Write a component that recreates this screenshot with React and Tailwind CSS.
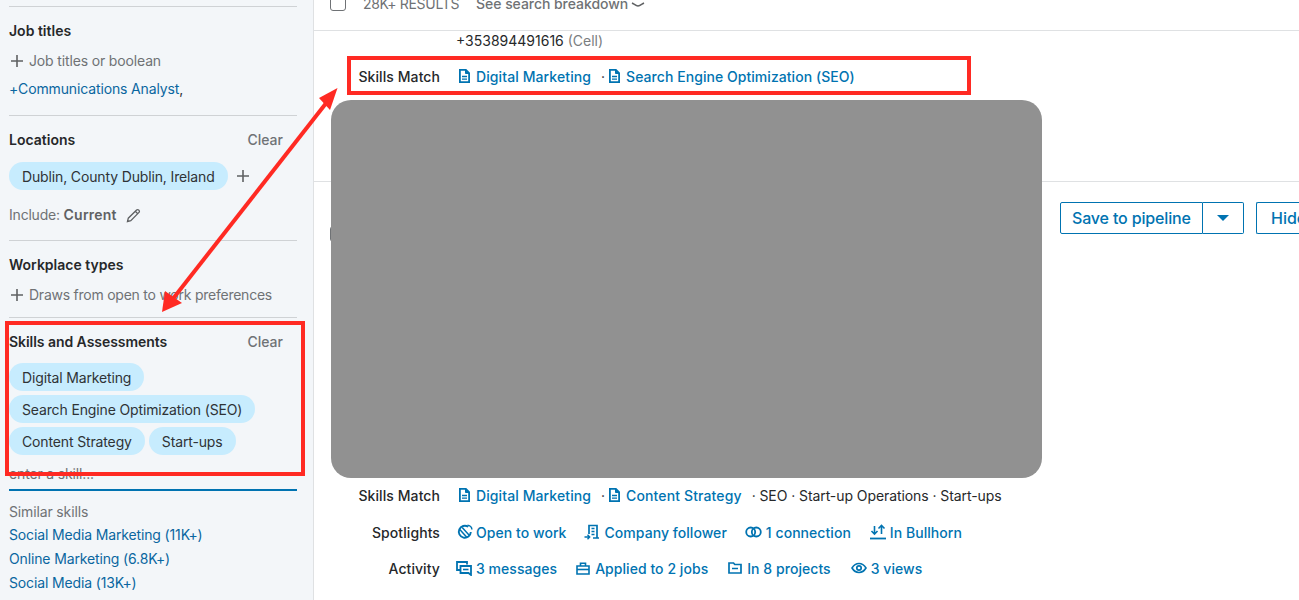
import React from "react";

const C = "#0073b1";
const Doc = () => (
  <svg width="11" height="14" viewBox="0 0 11 14" className="ml-px shrink-0">
    <path d="M.9 .9h6l3.200 3.200v9H.9z" fill="none" stroke={C} strokeWidth="1.800" />
    <path d="M6.500 1v3.500h3.500z" fill={C} stroke={C} />
    <path d="M3 7.500h5M3 10.200h5" stroke={C} strokeWidth="1.300" />
  </svg>
);
const Plus = () => (
  <svg width="14" height="14" viewBox="0 0 14 14" className="shrink-0">
    <path d="M7 1v12M1 7h12" stroke="#5f6163" strokeWidth="1.600" />
  </svg>
);
const Pill = ({ children }) => (
  <span className="inline-flex h-7 items-center whitespace-nowrap rounded-full bg-[#c7ecfe] px-[13px] text-[14px] tracking-[-0.14px] text-[#2f3336]">{children}</span>
);
const Divider = () => <div className="h-px bg-[#cfd2d5]" />;
const SideLink = ({ children, className = "" }) => (
  <div className={`text-[14px] leading-[24px] tracking-[-0.14px] text-[#0a66a0] ${className}`}>{children}</div>
);
const A = ({ icon, w, t = "tracking-[0.05px]", className = "", children }) => (
  <span className={`flex items-center whitespace-nowrap font-medium text-[#0073b1] ${t} ${className}`}>
    <span className={`flex justify-start ${w}`}>{icon}</span>{children}
  </span>
);
const s = { fill: "none", stroke: C, strokeWidth: 1.700 };

const OpenToWork = () => (
  <svg width="16" height="16" viewBox="0 0 16 16">
    <path d="M11.200 2.800A6 6 0 1 0 13.800 8" {...s} strokeWidth="1.900" />
    <path d="M2.800 5.400l7.200 8M5.200 3.400l7 7.800" {...s} strokeWidth="1.500" />
    <path d="M10.500 1.200a4.500 4.500 0 0 1 4.400 4.300" {...s} strokeWidth="1.500" />
  </svg>
);
const Company = () => (
  <svg width="16" height="16" viewBox="0 0 16 16">
    <path d="M5 10V1.500h8v12.500h2M9 14h4" {...s} />
    <path d="M7.500 4.500h3M7.500 7.500h3M7.500 10.500h3" {...s} strokeWidth="1.400" />
    <path d="M0.500 13h5M3.500 10.800l2.200 2.200-2.200 2.200" {...s} strokeWidth="1.400" />
  </svg>
);
const Connection = () => (
  <svg width="17" height="12" viewBox="0 0 17 12">
    <circle cx="5.700" cy="6" r="4.500" {...s} strokeWidth="1.800" />
    <circle cx="11.300" cy="6" r="4.500" {...s} strokeWidth="1.800" />
  </svg>
);
const Bullhorn = () => (
  <svg width="16" height="16" viewBox="0 0 16 16">
    <path d="M4.500 2v8M1.500 7l3 3.200L7.500 7" {...s} strokeWidth="1.600" />
    <path d="M11.500 10V1.500M8.500 4.500l3-3.200 3 3.200" {...s} strokeWidth="1.600" />
    <path d="M0 14.500h16" {...s} strokeWidth="1.800" />
  </svg>
);
const Messages = () => (
  <svg width="16" height="15" viewBox="0 0 16 15">
    <path d="M4 9H1V1h10v2.500" {...s} strokeWidth="1.800" />
    <path d="M4.500 5h10.500v9l-2.500-2H4.500z" {...s} strokeWidth="1.800" />
    <path d="M7 8.500h5.500" {...s} strokeWidth="1.600" />
  </svg>
);
const Briefcase = () => (
  <svg width="14" height="13" viewBox="0 0 14 13">
    <path d="M1 4h12v8H1zM4.500 4V1.200h5V4" {...s} strokeWidth="1.600" />
    <path d="M1 7.500h12" {...s} strokeWidth="1.600" />
  </svg>
);
const Folder = () => (
  <svg width="14" height="12" viewBox="0 0 14 12">
    <path d="M1 1h4.500l1.300 1.500H13V11H1z" {...s} strokeWidth="1.700" />
    <path d="M4 6.500h6" {...s} strokeWidth="1.500" />
  </svg>
);
const Eye = () => (
  <svg width="16" height="12" viewBox="0 0 16 12">
    <path d="M1 6c1.800-3 4-4.500 7-4.500S13.200 3 15 6c-1.800 3-4 4.500-7 4.500S2.800 9 1 6z" {...s} strokeWidth="1.600" />
    <circle cx="8" cy="6" r="2.200" {...s} strokeWidth="1.700" />
  </svg>
);

const Row = ({ label, className = "", children }) => (
  <div className={`flex h-[20px] items-center text-[14px] ${className}`}>
    <span className="w-[126px] shrink-0 text-right font-medium tracking-[0.08px] text-[#26282a]">{label}</span>
    <div className="ml-[18px] flex items-center">{children}</div>
  </div>
);
const Dot = ({ className = "" }) => <span className={`text-[#26282a] ${className}`}>·</span>;

const Sidebar = () => (
  <aside className="h-[600px] w-[314px] shrink-0 overflow-hidden border-r border-[#dfe1e3] bg-[#f3f6f9] pl-[9px] pr-[16px] pt-[6px]">
    <Divider />
    <div className="mt-[15px] text-[14px] font-semibold leading-[18px] text-[#26282a]">Job titles</div>
    <div className="mt-[12px] flex items-center gap-[5px] text-[14px] leading-[18px] tracking-[-0.15px] text-[#6f7275]"><span className="ml-px"><Plus /></span>Job titles or boolean</div>
    <div className="mt-[10px] text-[14px] leading-[18px] tracking-[-0.14px] text-[#0a66a0]">+Communications Analyst<span className="text-[#2f3336]">,</span></div>
    <div className="mt-[17px]"><Divider /></div>
    <div className="mt-[15px] flex justify-between pr-[14px] text-[14px] leading-[18px]"><span className="font-semibold text-[#26282a]">Locations</span><span className="font-medium text-[#6f7275]">Clear</span></div>
    <div className="mt-[13px] flex items-center"><Pill>Dublin, County Dublin, Ireland</Pill><span className="ml-[8px]"><Plus /></span></div>
    <div className="mt-[16px] flex items-center text-[14px] leading-[18px] text-[#6f7275]"><span className="tracking-[-0.2px]">Include:&nbsp;</span><b className="font-semibold tracking-[0.2px] text-[#5f6163]">Current</b>
      <svg width="15" height="15" viewBox="0 0 15 15" className="ml-[9px]"><path d="M1.500 13.500l.8-3.300L10.600 2a1.400 1.400 0 0 1 2 0l.4.4a1.400 1.400 0 0 1 0 2l-8.200 8.300zM9.300 3.300l2.400 2.400" fill="none" stroke="#5f6163" strokeWidth="1.300" /></svg>
    </div>
    <div className="mt-[16px]"><Divider /></div>
    <div className="mt-[15px] text-[14px] font-semibold leading-[18px] text-[#26282a]">Workplace types</div>
    <div className="mt-[12px] flex items-center gap-[5px] whitespace-nowrap text-[14px] leading-[18px] tracking-[-0.24px] text-[#6f7275]"><span className="ml-px"><Plus /></span>Draws from open to work preferences</div>
    <div className="mt-[13px]"><Divider /></div>
    <div className="mt-[15px] flex justify-between pr-[14px] text-[14px] leading-[18px]"><span className="font-semibold tracking-[-0.05px] text-[#26282a]">Skills and Assessments</span><span className="font-medium text-[#6f7275]">Clear</span></div>
    <div className="mt-[12px] flex flex-col items-start gap-1">
      <Pill>Digital Marketing</Pill>
      <Pill>Search Engine Optimization (SEO)</Pill>
      <div className="flex gap-1"><Pill>Content Strategy</Pill><Pill>Start-ups</Pill></div>
    </div>
    <div className="mt-[10px] text-[14px] leading-[18px] tracking-[-0.15px] text-[#6f7275]">enter a skill...</div>
    <div className="mt-[6px] h-[2px] bg-[#0073b1]" />
    <div className="mt-[12px] text-[14px] leading-[18px] tracking-[-0.14px] text-[#6f7275]">Similar skills</div>
    <SideLink className="mt-[2px]">Social Media Marketing (11K+)</SideLink>
    <SideLink>Online Marketing (6.8K+)</SideLink>
    <SideLink>Social Media (13K+)</SideLink>
  </aside>
);

const Overlay = () => (
  <>
    <div className="absolute left-[331px] top-[100px] h-[378px] w-[711px] rounded-[20px] bg-[#919191]" />
    <div className="absolute left-[347px] top-[56px] h-[39px] w-[624px] border-4 border-[#ff2a23]" />
    <div className="absolute left-[5px] top-[321px] h-[155px] w-[300px] border-4 border-[#ff2a23]" />
    <svg className="absolute left-0 top-0" width="1299" height="600" viewBox="0 0 1299 600" fill="none">
      <path d="M327 102L172 300" stroke="#ff2a23" strokeWidth="4" />
      <path d="M337.500 88L319 98l11 12z" fill="#ff2a23" />
      <path d="M162 312l3-21 17 12z" fill="#ff2a23" />
    </svg>
  </>
);

export default function App() {
  return (
    <div className="relative h-[600px] w-[1299px] overflow-hidden bg-white font-['Inter',sans-serif]">
      <div className="flex h-full">
        <Sidebar />
        <main className="relative min-w-0 flex-1 overflow-hidden">
          <div className="flex h-[31px] items-start border-b border-[#dfe1e3] pl-[16px] text-[14px] text-[#6f7275]">
            <div className="mt-[-5px] h-[16px] w-[16px] shrink-0 rounded-[3px] border border-[#6f7275]" />
            <span className="ml-[17px] mt-[-5px] whitespace-nowrap leading-[18px] tracking-[-0.3px]">28K+ RESULTS</span>
            <span className="ml-[17px] mt-[-5px] flex items-center whitespace-nowrap font-medium leading-[18px] tracking-[-0.05px]">See search breakdown
              <svg width="14" height="8" viewBox="0 0 14 8" className="ml-[3px] mt-px"><path d="M1 2c2 1 4 3 6 3s4-2 6-3" fill="none" stroke="#5f6163" strokeWidth="1.500" /></svg>
            </span>
          </div>
          <div className="pl-[142px] pt-px text-[14px] leading-[18px] text-[#26282a]">+353894491616 <span className="text-[#7a7d80]">(Cell)</span></div>
          <Row className="mt-[16px]" label="Skills Match">
            <A icon={<Doc />} w="w-[18px]" t="tracking-[0.1px]">Digital Marketing</A><Dot className="ml-[10px] mr-[3px]" /><A icon={<Doc />} w="w-[18px]">Search Engine Optimization (SEO)</A>
          </Row>
          <div className="mt-[95px] h-px bg-[#dfe1e3]" />
          <div className="flex h-[303px] items-start justify-between pt-[20px]">
            <div className="ml-[16px] mt-[24px] h-[16px] w-[16px] rounded-[3px] border border-[#6f7275]" />
            <div className="flex h-[32px] items-stretch">
              <button className="flex w-[143px] items-center rounded-l-[2px] border border-[#0073b1] pl-[11px] text-[16px] font-medium tracking-[-0.15px] text-[#0073b1]">Save to pipeline</button>
              <button className="flex w-[41px] items-center justify-center rounded-r-[2px] border border-l-0 border-[#0073b1]"><svg width="12" height="6" viewBox="0 0 12 6"><path d="M0 0h12L6 6z" fill="#0073b1" /></svg></button>
              <button className="ml-[12px] w-[43px] overflow-hidden whitespace-nowrap rounded-l-[2px] border border-r-0 border-[#0073b1] pl-[14px] text-left text-[16px] font-medium text-[#0073b1]">Hide</button>
            </div>
          </div>
          <Row label="Skills Match">
            <A icon={<Doc />} w="w-[18px]" t="tracking-[0.1px]">Digital Marketing</A><Dot className="ml-[10px] mr-[3px]" /><A icon={<Doc />} w="w-[18px]" t="tracking-[0.12px]">Content Strategy</A>
            <span className="ml-[10px] whitespace-nowrap tracking-[-0.08px] text-[#26282a]">· SEO · Start-up Operations · Start-ups</span>
          </Row>
          <Row className="mt-[17px]" label="Spotlights">
            <A icon={<OpenToWork />} w="w-[19px] -ml-[1px]">Open to work</A>
            <A icon={<Company />} w="w-[20px]" className="ml-[18px]">Company follower</A>
            <A icon={<Connection />} w="w-[21px]" className="ml-[18px]">1 connection</A>
            <A icon={<Bullhorn />} w="w-[20px]" className="ml-[19px]">In Bullhorn</A>
          </Row>
          <Row className="mt-[16px]" label="Activity">
            <A icon={<Messages />} w="w-[20px] -ml-[2px]">3 messages</A>
            <A icon={<Briefcase />} w="w-[19px]" className="ml-[19px]">Applied to 2 jobs</A>
            <A icon={<Folder />} w="w-[19px]" className="ml-[20px]">In 8 projects</A>
            <A icon={<Eye />} w="w-[20px]" className="ml-[20px]">3 views</A>
          </Row>
        </main>
      </div>
      <Overlay />
    </div>
  );
}
